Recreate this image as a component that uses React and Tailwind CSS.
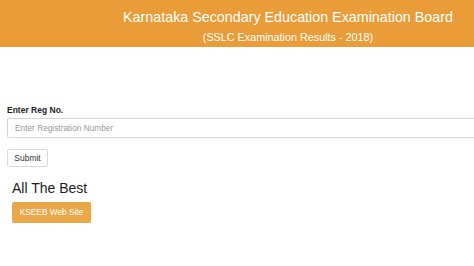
export default function App() {
  return (
    <div className="min-h-[266px] bg-white font-['Liberation_Sans',Arial,sans-serif]">
      <header className="h-[47px] bg-[#e99c38] pl-[102px] pt-[9px] text-center text-white">
        <h1 className="text-[14.3px] leading-[16px]">
          Karnataka Secondary Education Examination Board
        </h1>
        <p className="mt-[6px] text-[10.8px] leading-[13px]">
          (SSLC Examination Results - 2018)
        </p>
      </header>

      <main className="pl-[7px] pt-[58px]">
        <label className="block text-[8.5px] font-bold leading-[10px] text-[#222]">
          Enter Reg No.
        </label>
        <input
          type="text"
          placeholder="Enter Registration Number"
          className="mt-[3px] block h-[20px] w-full rounded-l-[2px] border border-r-0 border-[#d6d6d6] px-[7px] text-[8.3px] text-[#555] placeholder:text-[#9a9a9a] outline-none"
        />
        <button className="mt-[11px] h-[18px] w-[41px] rounded-[2px] border border-[#d9d9d9] bg-white text-[8.5px] leading-[16px] text-[#333]">
          Submit
        </button>

        <div className="pl-[5px]">
          <h2 className="mt-[12px] text-[14px] leading-[16px] text-[#222]">
            All The Best
          </h2>
          <a className="mt-[6px] inline-flex h-[21px] w-[79px] items-center justify-center rounded-[2px] bg-[#eaa748] text-[8.3px] text-white">
            KSEEB Web Site
          </a>
        </div>
      </main>
    </div>
  );
}
